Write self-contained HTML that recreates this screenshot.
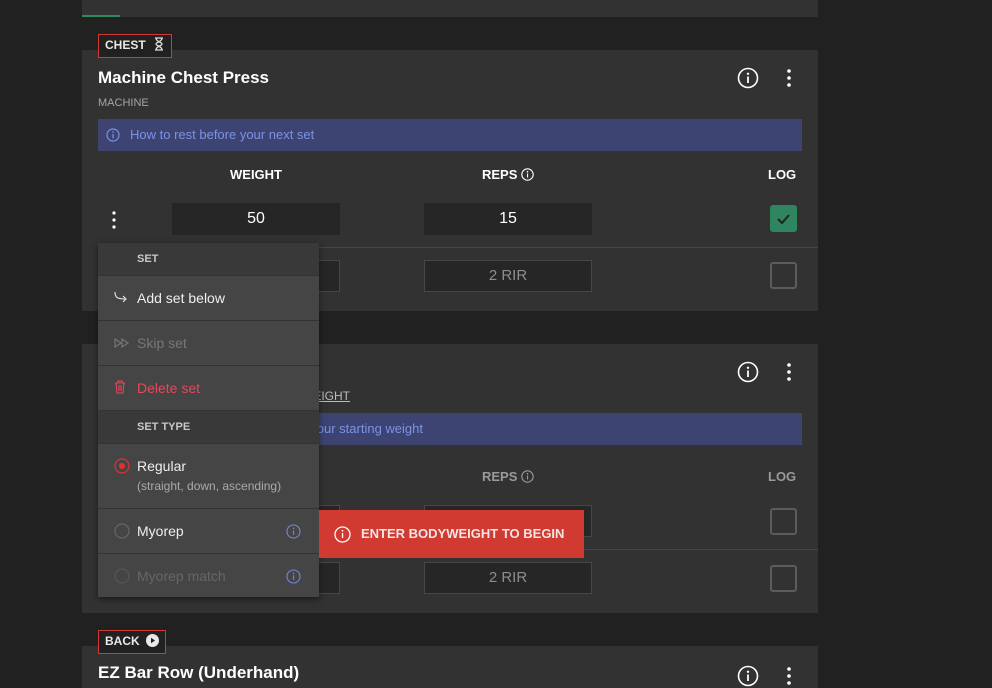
<!DOCTYPE html>
<html><head><meta charset="utf-8"><style>
*{box-sizing:border-box;margin:0;padding:0}
body{width:992px;height:688px;overflow:hidden;background:#212121;font-family:"Liberation Sans",sans-serif;position:relative;color:#fff}
.a{position:absolute}
.card{position:absolute;left:82px;width:736px;background:#323232}
.tag{position:absolute;border:1.5px solid #d03a34;background:#212121;color:#e8e8e8;font-size:12px;font-weight:bold;height:24px;line-height:21px;padding-left:6px}
.title{font-size:17px;font-weight:bold;color:#fff}
.sub{font-size:11px;color:#a5a5a5}
.info{position:absolute;left:16px;width:704px;height:32px;background:#3e4472;color:#7b92e6;font-size:13px;line-height:32px;overflow:hidden}
.hdr{font-size:13px;font-weight:bold;color:#fff;text-align:center}
.inp{position:absolute;width:168px;height:32px;background:#262626;text-align:center;line-height:32px;font-size:16px}
.inp2{position:absolute;width:168px;height:32px;background:#262626;border:1px solid #474747;text-align:center;line-height:30px;font-size:15px;color:#8d8d8d}
.cb{position:absolute;width:27px;height:27px;border:2px solid #5c5c5c;border-radius:3px}
.menu{position:absolute;left:98px;top:243px;width:221px;background:#454545;box-shadow:0 2px 6px rgba(0,0,0,.5)}
.mh{height:33px;background:#393939;color:#c8c8c8;font-size:11px;font-weight:bold;padding-left:39px;line-height:32px;border-bottom:1px solid #333}
.mi{height:45px;border-bottom:1px solid #333;font-size:14px;line-height:44px;padding-left:39px;position:relative}
.ic{position:absolute;left:16px}
</style></head><body>
<div class="card" style="top:0;height:17px"></div>
<div class="a" style="left:82px;top:15px;width:38px;height:2px;background:#2f8a60"></div>

<div class="card" style="top:50px;height:261px">
 <div class="title a" style="left:16px;top:18px">Machine Chest Press</div>
 <div class="sub a" style="left:16px;top:47px">MACHINE</div>
 <svg class="a" style="left:655px;top:17px" width="22" height="22" viewBox="0 0 22 22"><circle cx="11" cy="11" r="9.5" fill="none" stroke="#fff" stroke-width="1.6"/><circle cx="11" cy="6.8" r="1.2" fill="#fff"/><rect x="10.1" y="9.5" width="1.8" height="6.5" fill="#fff"/></svg>
 <svg class="a" style="left:702px;top:18px" width="10" height="20"><circle cx="5" cy="3" r="1.8" fill="#fff"/><circle cx="5" cy="10" r="1.8" fill="#fff"/><circle cx="5" cy="17" r="1.8" fill="#fff"/></svg>
 <div class="info" style="top:69px"><svg class="a" style="left:8px;top:9px" width="14" height="14"><circle cx="7" cy="7" r="6" fill="none" stroke="#7b92e6" stroke-width="1.2"/><rect x="6.4" y="6" width="1.2" height="4.5" fill="#7b92e6"/><circle cx="7" cy="4" r=".8" fill="#7b92e6"/></svg><span style="padding-left:32px">How to rest before your next set</span></div>
 <div class="hdr a" style="left:90px;top:117px;width:168px">WEIGHT</div>
 <div class="hdr a" style="left:342px;top:117px;width:168px">REPS <svg width="13" height="13" style="vertical-align:-2px"><circle cx="6.5" cy="6.5" r="5.7" fill="none" stroke="#fff" stroke-width="1.1"/><rect x="6" y="5.5" width="1.1" height="4" fill="#fff"/><circle cx="6.5" cy="3.7" r=".8" fill="#fff"/></svg></div>
 <div class="hdr a" style="left:686px;top:117px">LOG</div>
 <svg class="a" style="left:27px;top:160px" width="10" height="20"><circle cx="5" cy="3" r="1.6" fill="#fff"/><circle cx="5" cy="10" r="1.6" fill="#fff"/><circle cx="5" cy="17" r="1.6" fill="#fff"/></svg>
 <div class="inp" style="left:90px;top:153px">50</div>
 <div class="inp" style="left:342px;top:153px">15</div>
 <div class="a" style="left:688px;top:155px;width:27px;height:27px;background:#2e8560;border-radius:3px"><svg width="27" height="27"><path d="M8 14l4 4 7-8" fill="none" stroke="#222" stroke-width="2"/></svg></div>
 <div class="a" style="left:16px;top:197px;width:720px;height:1px;background:#444"></div>
 <div class="inp2" style="left:90px;top:210px"></div>
 <div class="inp2" style="left:342px;top:210px">2 RIR</div>
 <div class="cb" style="left:688px;top:212px"></div>
</div>
<div class="tag" style="left:98px;top:34px;width:74px">CHEST <svg width="12" height="14" style="vertical-align:-2px;margin-left:4px"><path d="M2 1h8M2 13h8M3 1c0 4 6 4 6 6s-6 2-6 6M9 1c0 4-6 4-6 6s6 2 6 6" fill="none" stroke="#ddd" stroke-width="1.3"/></svg></div>

<div class="card" style="top:344px;height:269px">
 <svg class="a" style="left:655px;top:17px" width="22" height="22" viewBox="0 0 22 22"><circle cx="11" cy="11" r="9.5" fill="none" stroke="#fff" stroke-width="1.6"/><circle cx="11" cy="6.8" r="1.2" fill="#fff"/><rect x="10.1" y="9.5" width="1.8" height="6.5" fill="#fff"/></svg>
 <svg class="a" style="left:702px;top:18px" width="10" height="20"><circle cx="5" cy="3" r="1.8" fill="#fff"/><circle cx="5" cy="10" r="1.8" fill="#fff"/><circle cx="5" cy="17" r="1.8" fill="#fff"/></svg>
 <div class="a" style="left:186px;top:45px;font-size:12px;color:#bbb;text-decoration:underline">BODYWEIGHT</div>
 <div class="info" style="top:69px"><span class="a" style="right:379px;white-space:nowrap">Enter your starting weight</span></div>
 <div class="hdr a" style="left:342px;top:125px;width:168px;color:#9a9a9a">REPS <svg width="13" height="13" style="vertical-align:-2px"><circle cx="6.5" cy="6.5" r="5.7" fill="none" stroke="#9a9a9a" stroke-width="1.1"/><rect x="6" y="5.5" width="1.1" height="4" fill="#9a9a9a"/><circle cx="6.5" cy="3.7" r=".8" fill="#9a9a9a"/></svg></div>
 <div class="hdr a" style="left:686px;top:125px;color:#9a9a9a">LOG</div>
 <div class="inp2" style="left:90px;top:161px"></div>
 <div class="inp2" style="left:342px;top:161px"></div>
 <div class="cb" style="left:688px;top:164px"></div>
 <div class="a" style="left:16px;top:205px;width:720px;height:1px;background:#444"></div>
 <div class="inp2" style="left:90px;top:218px"></div>
 <div class="inp2" style="left:342px;top:218px">2 RIR</div>
 <div class="cb" style="left:688px;top:221px"></div>
</div>

<div class="card" style="top:646px;height:42px">
 <div class="title a" style="left:16px;top:17px">EZ Bar Row (Underhand)</div>
 <svg class="a" style="left:655px;top:19px" width="22" height="22" viewBox="0 0 22 22"><circle cx="11" cy="11" r="9.5" fill="none" stroke="#fff" stroke-width="1.6"/><circle cx="11" cy="6.8" r="1.2" fill="#fff"/><rect x="10.1" y="9.5" width="1.8" height="6.5" fill="#fff"/></svg>
 <svg class="a" style="left:702px;top:20px" width="10" height="20"><circle cx="5" cy="3" r="1.8" fill="#fff"/><circle cx="5" cy="10" r="1.8" fill="#fff"/><circle cx="5" cy="17" r="1.8" fill="#fff"/></svg>
</div>
<div class="tag" style="left:98px;top:630px;width:68px">BACK <svg width="13" height="13" style="vertical-align:-2px;margin-left:3px"><circle cx="6.5" cy="6.5" r="6.5" fill="#e8e8e8"/><path d="M5 3.8v5.4l4-2.7z" fill="#212121"/></svg></div>

<div class="menu">
 <div class="mh">SET</div>
 <div class="mi" style="color:#eee"><svg class="ic" style="top:15px" width="14" height="12"><path d="M1 1c0 6 3 7 11 7M9 5l3 3-3 3" fill="none" stroke="#ddd" stroke-width="1.2"/></svg>Add set below</div>
 <div class="mi" style="color:#777"><svg class="ic" style="top:17px" width="16" height="10"><path d="M1 1l6 4-6 4zM8 1l6 4-6 4z" fill="none" stroke="#777" stroke-width="1.1"/></svg>Skip set</div>
 <div class="mi" style="color:#e5485a"><svg class="ic" style="top:14px" width="12" height="14"><path d="M1 3h10M4 3V1h4v2M2 3l1 10h6l1-10M5 5v6M7 5v6" fill="none" stroke="#e5485a" stroke-width="1.1"/></svg>Delete set</div>
 <div class="mh">SET TYPE</div>
 <div class="mi" style="height:65px;line-height:normal;padding-top:14px;color:#eee"><svg class="ic" style="top:14px" width="16" height="16"><circle cx="8" cy="8" r="7" fill="none" stroke="#d33" stroke-width="1.2"/><circle cx="8" cy="8" r="3" fill="#d33"/></svg>Regular<div style="font-size:12px;color:#aaa;margin-top:5px">(straight, down, ascending)</div></div>
 <div class="mi" style="color:#eee"><svg class="ic" style="top:14px" width="16" height="16"><circle cx="8" cy="8" r="7" fill="none" stroke="#666" stroke-width="1.2"/></svg>Myorep<svg class="a" style="left:188px;top:15px" width="15" height="15"><circle cx="7.5" cy="7.5" r="6.5" fill="none" stroke="#6f87e0" stroke-width="1.1"/><rect x="7" y="6.3" width="1.1" height="4.5" fill="#6f87e0"/><circle cx="7.5" cy="4.3" r=".8" fill="#6f87e0"/></svg></div>
 <div class="mi" style="color:#666;border-bottom:none;height:43px"><svg class="ic" style="top:14px" width="16" height="16"><circle cx="8" cy="8" r="7" fill="none" stroke="#555" stroke-width="1.2"/></svg>Myorep match<svg class="a" style="left:188px;top:15px" width="15" height="15"><circle cx="7.5" cy="7.5" r="6.5" fill="none" stroke="#6f87e0" stroke-width="1.1"/><rect x="7" y="6.3" width="1.1" height="4.5" fill="#6f87e0"/><circle cx="7.5" cy="4.3" r=".8" fill="#6f87e0"/></svg></div>
</div>

<div class="a" style="left:319px;top:510px;width:265px;height:48px;background:#d13a31;font-size:13px;font-weight:bold;line-height:48px;color:#f4e6e4;padding-left:42px"><svg class="a" style="left:15px;top:16px" width="17" height="17"><circle cx="8.5" cy="8.5" r="7.5" fill="none" stroke="#fff" stroke-width="1.3"/><rect x="7.9" y="7" width="1.3" height="5" fill="#fff"/><circle cx="8.5" cy="4.8" r=".9" fill="#fff"/></svg>ENTER BODYWEIGHT TO BEGIN</div>
</body></html>
